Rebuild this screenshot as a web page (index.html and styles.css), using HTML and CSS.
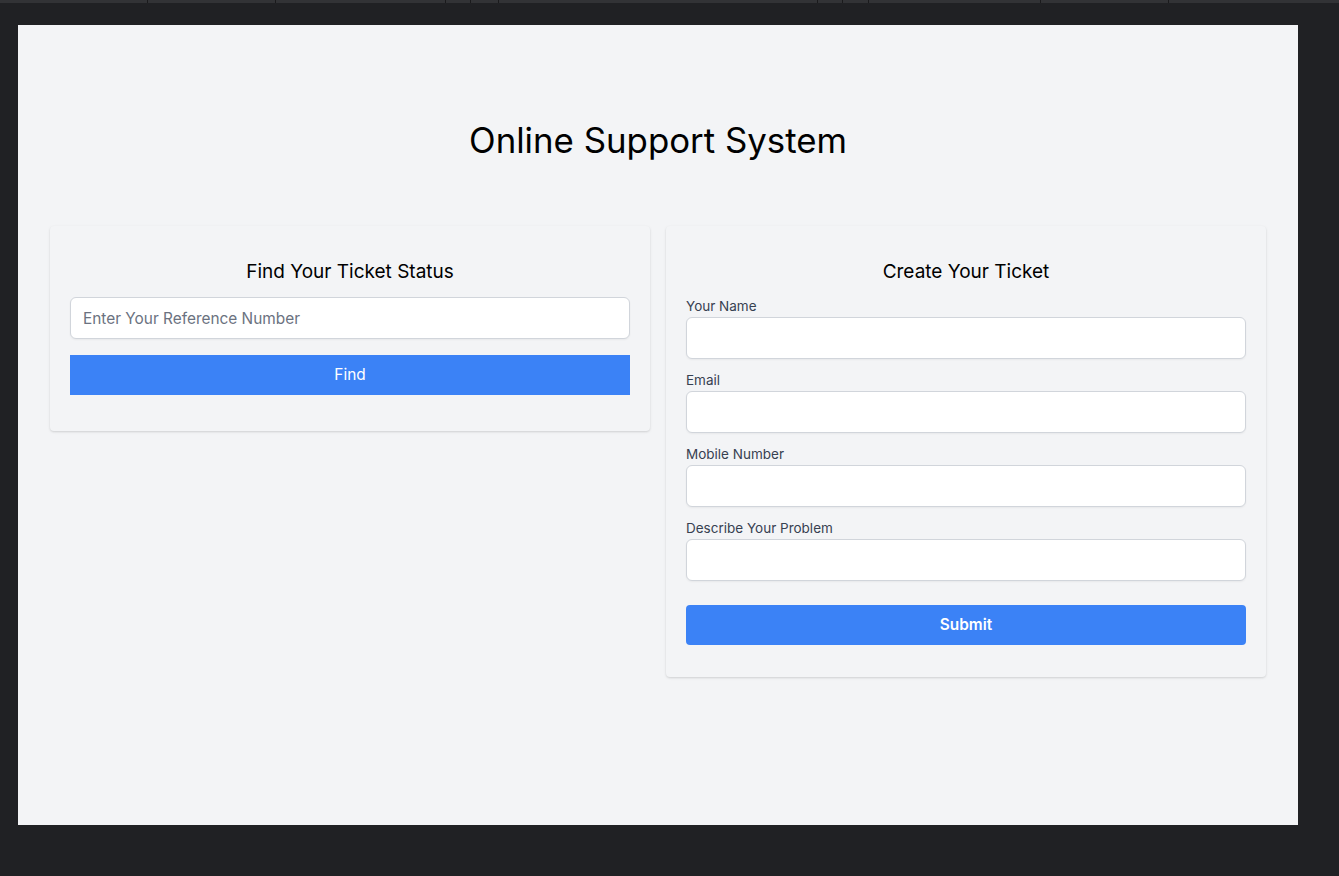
FILE: index.html
```html
<!DOCTYPE html>
<html lang="en">
<head>
<meta charset="utf-8">
<title>Online Support System</title>
<link rel="stylesheet" href="styles.css">
</head>
<body>
<div class="topbar">
  <span class="tick t1"></span><span class="tick t2"></span><span class="tick t3"></span><span class="tick t4"></span><span class="tick t5"></span><span class="tick t6"></span><span class="tick t7"></span><span class="tick t8"></span><span class="tick t9"></span><span class="tick t10"></span>
</div>
<main class="page">
  <h1 class="page-title">Online Support System</h1>
  <div class="columns">
    <section class="card card-find">
      <h2 class="card-title">Find Your Ticket Status</h2>
      <input class="field" type="text" placeholder="Enter Your Reference Number">
      <button class="btn btn-find">Find</button>
    </section>
    <section class="card card-create">
      <h2 class="card-title">Create Your Ticket</h2>
      <label class="label">Your Name</label>
      <input class="field" type="text">
      <label class="label">Email</label>
      <input class="field" type="text">
      <label class="label">Mobile Number</label>
      <input class="field" type="text">
      <label class="label">Describe Your Problem</label>
      <input class="field" type="text">
      <button class="btn btn-submit">Submit</button>
    </section>
  </div>
</main>
</body>
</html>
```
FILE: styles.css
```css
* { box-sizing: border-box; }
html, body {
  margin: 0;
  background: #202124;
  font-family: Inter, "Noto Sans", sans-serif;
  height: 876px;
  overflow: hidden;
}
.topbar {
  height: 3px;
  background: #323336;
  position: relative;
}
.tick {
  position: absolute;
  top: 0;
  width: 1px;
  height: 3px;
  background: #1a1a1c;
}
.t1 { left: 147px; } .t2 { left: 275px; } .t3 { left: 445px; } .t4 { left: 470px; }
.t5 { left: 498px; } .t6 { left: 817px; } .t7 { left: 842px; } .t8 { left: 868px; }
.t9 { left: 1040px; } .t10 { left: 1168px; }
.page {
  margin: 22px 0 0 18px;
  width: 1280px;
  height: 800px;
  background: #f3f4f6;
  padding: 0 32px;
  display: flex;
  flex-direction: column;
}
.page-title {
  margin: 95px 0 66px;
  font-size: 34.8px;
  line-height: 40px;
  font-weight: 400;
  text-align: center;
  color: #000;
}
.columns {
  display: grid;
  grid-template-columns: 600px 600px;
  column-gap: 16px;
  align-items: start;
}
.card {
  background: #f3f4f6;
  border-radius: 4px;
  box-shadow: 0 1px 3px rgba(0,0,0,0.1), 0 1px 2px rgba(0,0,0,0.06);
  padding: 20px 20px 36px;
  display: flex;
  flex-direction: column;
}
.card-create { padding-bottom: 32px; }
.card-title {
  margin: 12px 0 11px;
  font-size: 19px;
  line-height: 28px;
  font-weight: 400;
  text-align: center;
  color: #000;
}
.label {
  font-size: 13.5px;
  line-height: 20px;
  color: #374151;
  position: relative;
  top: -1px;
}
.field {
  display: block;
  width: 100%;
  height: 42px;
  border: 1px solid #d1d5db;
  border-radius: 6px;
  background: #fff;
  padding: 0 12px;
  font-family: inherit;
  font-size: 15.4px;
  color: #111827;
  box-shadow: 0 1px 2px rgba(0,0,0,0.05);
}
.card-create .field { margin-bottom: 12px; }
.field::placeholder { color: #6b7280; }
.btn {
  display: block;
  width: 100%;
  height: 40px;
  border: none;
  background: #3b82f6;
  color: #fff;
  font-family: inherit;
  font-size: 15.4px;
  line-height: 39px;
  padding: 0 0 1px;
  cursor: pointer;
}
.btn-find { margin-top: 16px; border-radius: 0; font-weight: 400; }
.btn-submit { margin-top: 12px; border-radius: 4px; font-weight: 600; }
```
